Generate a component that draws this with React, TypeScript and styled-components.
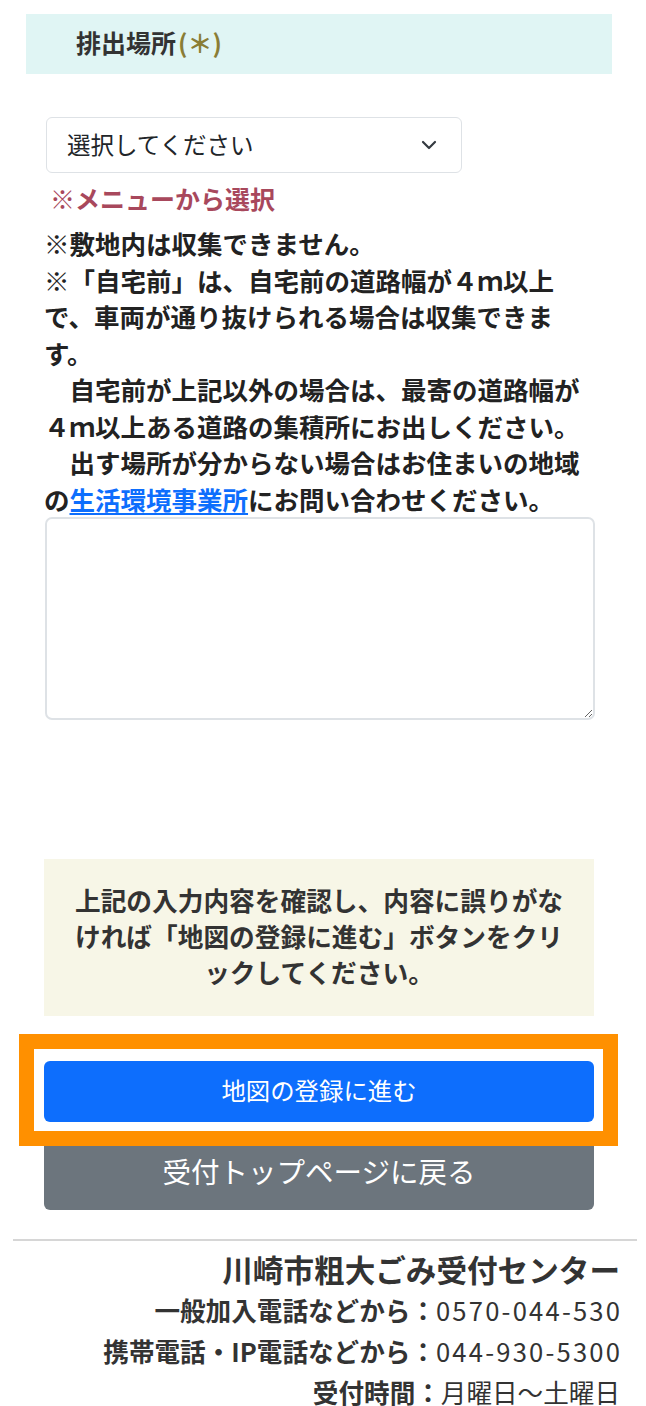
import React from "react"
import styled, { createGlobalStyle } from "styled-components"

const GlobalStyle = createGlobalStyle`
  html, body {
    margin: 0;
    padding: 0;
    background: #ffffff;
  }
  body {
    font-family: "Noto Sans CJK JP", "Noto Sans", sans-serif;
    color: #212529;
  }
`

const Page = styled.div`
  width: 646px;
  padding-top: 14px;
`

const SectionHead = styled.div`
  margin: 0 34px 0 26px;
  height: 60px;
  display: flex;
  align-items: center;
  padding-left: 50px;
  padding-bottom: 4px;
  box-sizing: border-box;
  background-color: #e0f5f4;
  font-size: 25px;
  font-weight: 700;
  color: #333333;
`

const Required = styled.span`
  color: #8a7d35;
  font-weight: 700;
  margin-left: 2px;
`

const FormBody = styled.div`
  padding: 0 52px 0 44px;
`

const SelectBox = styled.div`
  margin-top: 43px;
  margin-left: 2px;
  width: 416px;
  height: 56px;
  box-sizing: border-box;
  border: 1px solid #dee2e6;
  border-radius: 6px;
  display: flex;
  align-items: center;
  justify-content: space-between;
  padding: 0 24px 3px 20px;
  font-size: 23.5px;
  color: #212529;

  svg {
    margin-top: 3px;
  }
`

const Note = styled.div`
  margin-top: 7px;
  padding-left: 6px;
  line-height: 36px;
  font-size: 25px;
  font-weight: 700;
  color: #a8485c;
`

const Guide = styled.p`
  margin: 9px 0 0;
  font-size: 25.5px;
  line-height: 36.5px;
  font-weight: 700;
  color: #222222;
  white-space: pre;

  a {
    color: #0d6efd;
    text-decoration: underline;
    text-underline-offset: 3px;
  }
`

const Memo = styled.textarea`
  display: block;
  width: 550px;
  height: 203px;
  box-sizing: border-box;
  margin-left: 1px;
  border: 2px solid #dee2e6;
  border-radius: 7px;
  font-family: inherit;
  font-size: 20px;
  background: #ffffff;
`

const Confirm = styled.div`
  margin-top: 139px;
  height: 157px;
  box-sizing: border-box;
  padding-top: 23px;
  background-color: #f7f6e7;
  text-align: center;
  font-size: 25.7px;
  line-height: 36px;
  font-weight: 700;
  color: #333333;
  white-space: nowrap;
`

const Actions = styled.div`
  margin-top: 45px;
  display: flex;
  flex-direction: column;
  gap: 14px;
`

const Focus = styled.div`
  position: relative;

  &::after {
    content: "";
    position: absolute;
    top: -27px;
    left: -25px;
    right: -24px;
    bottom: -24px;
    border: 15px solid #ff9000;
    pointer-events: none;
  }
`

const Button = styled.button<{ $tone: "primary" | "secondary" }>`
  display: block;
  width: 550px;
  height: ${(p) => (p.$tone === "primary" ? "61px" : "74px")};
  padding: 0 0 ${(p) => (p.$tone === "primary" ? "5px" : "6px")};
  border: none;
  border-radius: 6px;
  color: #ffffff;
  font-family: inherit;
  font-size: ${(p) => (p.$tone === "primary" ? "24.4px" : "28.5px")};
  background-color: ${(p) => (p.$tone === "primary" ? "#0d6efd" : "#6c757d")};
`

const Divider = styled.hr`
  margin: 29px 9px 0 13px;
  border: none;
  border-top: 2px solid #d6d6d6;
`

const Footer = styled.footer`
  padding: 8px 26px 0 0;
  text-align: right;
  color: #333333;
`

const CenterName = styled.div`
  font-size: 30.6px;
  font-weight: 700;
  line-height: 40px;
`

const Contact = styled.div`
  font-size: 25.6px;
  line-height: 41px;
  white-space: nowrap;

  b {
    font-weight: 700;
  }
`

const Digits = styled.span`
  letter-spacing: 2.2px;
  margin-right: -2.2px;
`

const Chevron = () => (
  <svg width="16" height="10" viewBox="0 0 16 10" fill="none">
    <path d="M2 2l6 6 6-6" stroke="#343a40" strokeWidth="2.2" strokeLinecap="round" strokeLinejoin="round" />
  </svg>
)

const App = () => {
  return (
    <>
      <GlobalStyle />
      <Page>
        <SectionHead>
          排出場所<Required>(＊)</Required>
        </SectionHead>
        <FormBody>
          <SelectBox>
            <span>選択してください</span>
            <Chevron />
          </SelectBox>
          <Note>※メニューから選択</Note>
          <Guide>
            {"※敷地内は収集できません。\n"}
            {"※「自宅前」は、自宅前の道路幅が４ｍ以上\n"}
            {"で、車両が通り抜けられる場合は収集できま\n"}
            {"す。\n"}
            {"　自宅前が上記以外の場合は、最寄の道路幅が\n"}
            {"４ｍ以上ある道路の集積所にお出しください。\n"}
            {"　出す場所が分からない場合はお住まいの地域\n"}
            {"の"}
            <a href="#office">生活環境事業所</a>
            {"にお問い合わせください。"}
          </Guide>
          <Memo />
          <Confirm>
            上記の入力内容を確認し、内容に誤りがな
            <br />
            ければ「地図の登録に進む」ボタンをクリ
            <br />
            ックしてください。
          </Confirm>
          <Actions>
            <Focus>
              <Button $tone="primary">地図の登録に進む</Button>
            </Focus>
            <Button $tone="secondary">受付トップページに戻る</Button>
          </Actions>
        </FormBody>
        <Divider />
        <Footer>
          <CenterName>川崎市粗大ごみ受付センター</CenterName>
          <Contact>
            <b>一般加入電話などから：</b>
            <Digits>0570-044-530</Digits>
          </Contact>
          <Contact>
            <b>携帯電話・IP電話などから：</b>
            <Digits>044-930-5300</Digits>
          </Contact>
          <Contact>
            <b>受付時間：</b>月曜日〜土曜日
          </Contact>
        </Footer>
      </Page>
    </>
  )
}

export default App
